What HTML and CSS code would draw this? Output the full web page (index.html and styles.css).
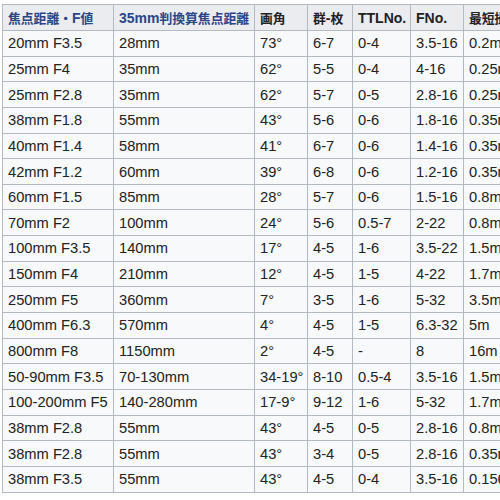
FILE: index.html
```html
<!DOCTYPE html>
<html lang="ja">
<head>
<meta charset="utf-8">
<title>レンズ一覧</title>
<link rel="stylesheet" href="styles.css">
</head>
<body>
<table class="spec">
  <colgroup>
    <col class="c1"><col class="c2"><col class="c3"><col class="c4"><col class="c5"><col class="c6"><col class="c7">
  </colgroup>
  <thead>
    <tr>
      <th class="link"><span class="ja">焦点距離・</span>F<span class="ja">値</span></th>
      <th class="link">35mm<span class="ja">判換算焦点距離</span></th>
      <th><span class="ja">画角</span></th>
      <th><span class="ja">群</span>-<span class="ja">枚</span></th>
      <th>TTLNo.</th>
      <th>FNo.</th>
      <th><span class="ja">最短撮影距離</span></th>
    </tr>
  </thead>
  <tbody>
    <tr><td>20mm F3.5</td><td>28mm</td><td>73°</td><td>6-7</td><td>0-4</td><td>3.5-16</td><td>0.2m</td></tr>
    <tr><td>25mm F4</td><td>35mm</td><td>62°</td><td>5-5</td><td>0-4</td><td>4-16</td><td>0.25m</td></tr>
    <tr><td>25mm F2.8</td><td>35mm</td><td>62°</td><td>5-7</td><td>0-5</td><td>2.8-16</td><td>0.25m</td></tr>
    <tr><td>38mm F1.8</td><td>55mm</td><td>43°</td><td>5-6</td><td>0-6</td><td>1.8-16</td><td>0.35m</td></tr>
    <tr><td>40mm F1.4</td><td>58mm</td><td>41°</td><td>6-7</td><td>0-6</td><td>1.4-16</td><td>0.35m</td></tr>
    <tr><td>42mm F1.2</td><td>60mm</td><td>39°</td><td>6-8</td><td>0-6</td><td>1.2-16</td><td>0.35m</td></tr>
    <tr><td>60mm F1.5</td><td>85mm</td><td>28°</td><td>5-7</td><td>0-6</td><td>1.5-16</td><td>0.8m</td></tr>
    <tr><td>70mm F2</td><td>100mm</td><td>24°</td><td>5-6</td><td>0.5-7</td><td>2-22</td><td>0.8m</td></tr>
    <tr><td>100mm F3.5</td><td>140mm</td><td>17°</td><td>4-5</td><td>1-6</td><td>3.5-22</td><td>1.5m</td></tr>
    <tr><td>150mm F4</td><td>210mm</td><td>12°</td><td>4-5</td><td>1-5</td><td>4-22</td><td>1.7m</td></tr>
    <tr><td>250mm F5</td><td>360mm</td><td>7°</td><td>3-5</td><td>1-6</td><td>5-32</td><td>3.5m</td></tr>
    <tr><td>400mm F6.3</td><td>570mm</td><td>4°</td><td>4-5</td><td>1-5</td><td>6.3-32</td><td>5m</td></tr>
    <tr><td>800mm F8</td><td>1150mm</td><td>2°</td><td>4-5</td><td>-</td><td>8</td><td>16m</td></tr>
    <tr><td>50-90mm F3.5</td><td>70-130mm</td><td>34-19°</td><td>8-10</td><td>0.5-4</td><td>3.5-16</td><td>1.5m</td></tr>
    <tr><td>100-200mm F5</td><td>140-280mm</td><td>17-9°</td><td>9-12</td><td>1-6</td><td>5-32</td><td>1.7m</td></tr>
    <tr><td>38mm F2.8</td><td>55mm</td><td>43°</td><td>4-5</td><td>0-5</td><td>2.8-16</td><td>0.8m</td></tr>
    <tr><td>38mm F2.8</td><td>55mm</td><td>43°</td><td>3-4</td><td>0-5</td><td>2.8-16</td><td>0.35m</td></tr>
    <tr><td>38mm F3.5</td><td>55mm</td><td>43°</td><td>4-5</td><td>0-4</td><td>3.5-16</td><td>0.156m</td></tr>
  </tbody>
</table>
</body>
</html>
```

FILE: styles.css
```css
html, body {
  margin: 0;
  padding: 0;
  background: #ffffff;
  overflow: hidden;
}

body {
  padding: 4px 0 0 2px;
  font-family: "Liberation Sans", "Noto Sans CJK JP", sans-serif;
  color: #222222;
}

.spec {
  border-collapse: collapse;
  table-layout: fixed;
  width: 531px;
  background: #f8f9fa;
  border: 1px solid #b4bac1;
}

.c1 { width: 111px; }
.c2 { width: 141px; }
.c3 { width: 53px; }
.c4 { width: 45px; }
.c5 { width: 58px; }
.c6 { width: 53px; }
.c7 { width: 70px; }

.spec th,
.spec td {
  border: 1px solid #b4bac1;
  padding: 0 5px;
  text-align: left;
  white-space: nowrap;
  overflow: hidden;
}

.spec th {
  height: 25px;
  background: #eaecf0;
  font-size: 14px;
  font-weight: bold;
  color: #222222;
}

.spec th .ja {
  font-size: 12.8px;
}

.spec th.link {
  color: #2b4587;
  padding-right: 3px;
}

.spec td {
  height: 24.65px;
  font-size: 14.7px;
}
```
